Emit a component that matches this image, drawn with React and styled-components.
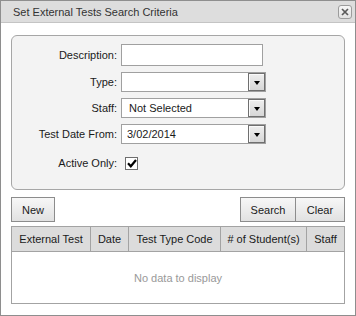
import React from "react"
import styled, { createGlobalStyle } from "styled-components"

const GlobalStyle = createGlobalStyle`
  body {
    margin: 0;
    background: #fff;
    font-family: "Liberation Sans", Arial, sans-serif;
  }
`

const Dialog = styled.div`
  width: 356px;
  height: 316px;
  box-sizing: border-box;
  border: 1px solid #8e8e8e;
  background: #fff;
  font-size: 11px;
  color: #1a1a1a;
`
const TitleBar = styled.div`
  height: 21px;
  display: flex;
  align-items: center;
  justify-content: space-between;
  padding: 0 3px 0 12px;
  background: #dddddd;
  border-bottom: 1px solid #c4c4c4;
  color: #333;
`
const CloseButton = styled.div`
  width: 12px;
  height: 12px;
  border: 1px solid #9c9c9c;
  border-radius: 3px;
  background: linear-gradient(#f6f6f6, #e2e2e2);
  display: flex;
  align-items: center;
  justify-content: center;
`
const Body = styled.div`
  padding: 12px 10px 0;
`
const Panel = styled.div`
  height: 155px;
  box-sizing: border-box;
  border: 1px solid #a6a6a6;
  border-radius: 6px;
  background: #f3f3f3;
  padding-top: 8px;
  display: grid;
  grid-template-columns: 105px auto;
  column-gap: 4px;
  grid-auto-rows: min-content;
  row-gap: 6px;
  align-items: center;
`
const Label = styled.div`
  text-align: right;
  white-space: nowrap;
`
const TextInput = styled.div`
  width: 140px;
  height: 20px;
  border: 1px solid #a0a0a0;
  background: #fff;
`
const Select = styled.div`
  width: 143px;
  height: 18px;
  border: 1px solid #a0a0a0;
  background: #fff;
  display: flex;
  align-items: center;
`
const SelectValue = styled.div`
  flex: 1;
  padding-left: ${(p) => p.$indent || 5}px;
`
const ArrowButton = styled.div`
  width: 15px;
  height: 16px;
  border: 1px solid #6f6f6f;
  box-shadow: inset 1px 1px #fafafa;
  background: linear-gradient(#eeeeee, #d6d6d6);
  display: flex;
  align-items: center;
  justify-content: center;
`
const Arrow = styled.div`
  width: 0;
  height: 0;
  border-left: 3.5px solid transparent;
  border-right: 3.5px solid transparent;
  border-top: 4px solid #000;
  margin-top: 1px;
`
const CheckCell = styled.div`
  height: 26px;
  display: flex;
  align-items: center;
  padding-left: 4px;
`
const Checkbox = styled.div`
  width: 11px;
  height: 11px;
  border: 1px solid #6e6e6e;
  background: #fff;
  display: flex;
  align-items: center;
  justify-content: center;
`
const Toolbar = styled.div`
  display: flex;
  margin-top: 7px;
  height: 25px;
`
const Spacer = styled.div`
  flex: 1;
`
const Button = styled.div`
  width: ${(p) => p.$w}px;
  box-sizing: border-box;
  border: 1px solid #8c8c8c;
  margin-left: ${(p) => (p.$joined ? -1 : 0)}px;
  background: linear-gradient(#f7f7f7, #e1e1e1);
  display: flex;
  align-items: center;
  justify-content: center;
  color: #1a1a1a;
`
const Grid = styled.div`
  margin-top: 4px;
  border: 1px solid #a3a3a3;
`
const HeaderRow = styled.div`
  display: grid;
  grid-template-columns: 78px 38px 92px 86px 1fr;
  height: 24px;
  background: #dcdcdc;
  border-bottom: 1px solid #a3a3a3;
`
const HeaderCell = styled.div`
  display: flex;
  align-items: center;
  justify-content: center;
  border-left: ${(p) => (p.$first ? "none" : "1px solid #a3a3a3")};
  white-space: nowrap;
`
const Empty = styled.div`
  height: 51px;
  display: flex;
  align-items: center;
  justify-content: center;
  color: #999;
`

const DropDown = ({ value, indent }) => (
  <Select>
    <SelectValue $indent={indent}>{value}</SelectValue>
    <ArrowButton>
      <Arrow />
    </ArrowButton>
  </Select>
)

const columns = ["External Test", "Date", "Test Type Code", "# of Student(s)", "Staff"]

export default function App() {
  return (
    <>
      <GlobalStyle />
      <Dialog>
        <TitleBar>
          <span>Set External Tests Search Criteria</span>
          <CloseButton>
            <svg width="8" height="8" viewBox="0 0 8 8">
              <path d="M1 1L7 7M7 1L1 7" stroke="#5a5a5a" strokeWidth="1.7" />
            </svg>
          </CloseButton>
        </TitleBar>
        <Body>
          <Panel>
            <Label>Description:</Label>
            <TextInput />
            <Label>Type:</Label>
            <DropDown value="" />
            <Label>Staff:</Label>
            <DropDown value="Not Selected" indent={7} />
            <Label>Test Date From:</Label>
            <DropDown value="3/02/2014" />
            <Label>Active Only:</Label>
            <CheckCell>
              <Checkbox>
                <svg width="10" height="9" viewBox="0 0 10 9">
                  <path d="M1 4.3L3.8 7.3L9 1" fill="none" stroke="#000" strokeWidth="2.2" />
                </svg>
              </Checkbox>
            </CheckCell>
          </Panel>
          <Toolbar>
            <Button $w={44}>New</Button>
            <Spacer />
            <Button $w={56}>Search</Button>
            <Button $w={50} $joined>Clear</Button>
          </Toolbar>
          <Grid>
            <HeaderRow>
              {columns.map((c, i) => (
                <HeaderCell key={c} $first={i === 0}>{c}</HeaderCell>
              ))}
            </HeaderRow>
            <Empty>No data to display</Empty>
          </Grid>
        </Body>
      </Dialog>
    </>
  )
}
